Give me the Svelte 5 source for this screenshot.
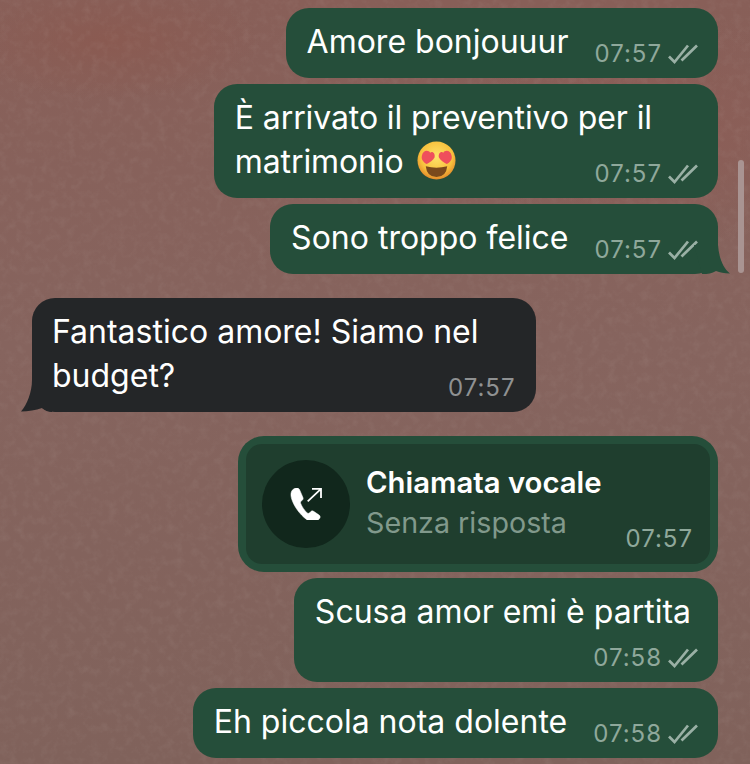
<script>
  const ticks = "M1 12.500 L6.500 18 L20 1.500 M13.500 16.500 L29 1.500";
</script>

<main class="chat">
  <svg class="texture" width="750" height="764" aria-hidden="true">
    <filter id="mottle">
      <feTurbulence type="fractalNoise" baseFrequency="0.12" numOctaves="4" seed="7" />
      <feColorMatrix values="0 0 0 0 0.6  0 0 0 0 0.52  0 0 0 0 0.48  1.2 0.4 0 0 -0.72" />
    </filter>
    <rect width="750" height="764" filter="url(#mottle)" opacity="0.14" />
  </svg>

  <div class="bubble out">
    Amore bonjouuur
    {@render meta("07:57", true)}
  </div>
  <div class="bubble out long">
    È arrivato il preventivo per il<br />matrimonio
    <svg class="emoji" viewBox="0 0 40 40" width="39" height="39">
      <defs>
        <radialGradient id="face" cx="50%" cy="40%" r="60%">
          <stop offset="0" stop-color="#fde36a" />
          <stop offset="0.7" stop-color="#f8c13d" />
          <stop offset="1" stop-color="#e2892a" />
        </radialGradient>
      </defs>
      <circle cx="20" cy="20" r="19.500" fill="url(#face)" />
      <path d="M9 26 Q20 29 31 26 Q30 37 20 37 Q10 37 9 26Z" fill="#7a4a1c" />
      <path d="M5 15 C6 9 12 9 13.500 12 C16 10 19 13 18 17 C16.500 20 13 22 10 23.500 C7 22 4 19 5 15Z" fill="#ef4f5c" />
      <path d="M35.500 15 C34.500 9 28.500 9 27 12 C24.500 10 21.500 13 22.500 17 C24 20 27.500 22 30.500 23.500 C33.500 22 36.500 19 35.500 15Z" fill="#ef4f5c" />
    </svg>
    {@render meta("07:57", true)}
  </div>
  <div class="bubble out tail-right">
    Sono troppo felice
    {@render meta("07:57", true)}
    <svg class="tail" viewBox="0 0 36 29" width="36" height="29"><path d="M24 0 C25 13 29 23 36 28.500 C30 28.500 26 27.500 22 26 C18 28.500 14 29 8 29 L0 0Z" /></svg>
  </div>

  <div class="bubble in">
    Fantastico amore! Siamo nel<br />budget?
    {@render meta("07:57", false)}
    <svg class="tail" viewBox="0 0 32 32" width="32" height="32"><path d="M12 0 C12 12 7 25 1 31.500 C8 31.500 16 30 22 28 C25 30.500 28 32 32 32 L32 0Z" /></svg>
  </div>

  <div class="bubble out call">
    <div class="call-inner">
      <span class="call-icon">
        <svg viewBox="0 0 32 32" width="32" height="32">
          <path transform="translate(-3.200 -3.200) scale(1.290)" d="M5 3.500 C3 5 2.800 8 3.800 11 C5.500 16.500 10 23 15.500 27 C18 28.800 20.500 29.300 22.500 28.500 C24 27.800 25.500 26.500 25.800 25.300 C26 24.300 25.500 23.800 24.800 23.300 L20.800 20.600 C20 20 19.200 20.100 18.500 20.800 L17.500 21.800 C16.900 22.300 16.300 22.200 15.800 21.800 C13.800 20 11.700 17 10.700 14.300 C10.500 13.600 10.700 13 11.300 12.600 L11.900 12 C12.700 11.400 12.800 10.600 12.500 9.800 L10 4 C9.500 3 8.800 2.500 7.800 2.500 C6.800 2.500 5.800 2.900 5 3.500Z" fill="#fff" stroke="#fff" stroke-width="0.400" />
          <path d="M17.700 13.300 L31 0.900 M22 0.900 H31 V10" fill="none" stroke="#fff" stroke-width="1.800" />
        </svg>
      </span>
      <div class="call-text">
        <strong>Chiamata vocale</strong>
        <span>Senza risposta</span>
      </div>
      <span class="time">07:57</span>
    </div>
  </div>

  <div class="bubble out wide">
    Scusa amor emi è partita<br />
    {@render meta("07:58", true)}
  </div>
  <div class="bubble out">
    Eh piccola nota dolente
    {@render meta("07:58", true)}
  </div>

  <div class="scrollbar"></div>
</main>

{#snippet meta(time, read)}
  <span class="meta">
    <span class="time">{time}</span>
    {#if read}
      <svg class="ticks" viewBox="0 0 30 20" width="30" height="20"><path d={ticks} /></svg>
    {/if}
  </span>
{/snippet}

<style>
  :global(body) {
    margin: 0;
    background: #86635f;
  }

  .chat {
    position: relative;
    box-sizing: border-box;
    width: 750px;
    height: 764px;
    overflow: hidden;
    padding: 8px 32px 0;
    display: flex;
    flex-direction: column;
    align-items: flex-end;
    background:
      radial-gradient(ellipse 150px 60px at 110px 40px, #8a5a51, transparent),
      radial-gradient(ellipse 200px 120px at 660px 130px, #8c5d56, transparent),
      linear-gradient(#885f58, #86645e 45%, #80625b);
    font-family: Inter, "Liberation Sans", sans-serif;
    font-size: 32px;
    line-height: 44px;
    color: #fff;
  }

  .texture {
    position: absolute;
    inset: 0;
  }

  .bubble {
    --trail: 0px;
    position: relative;
    display: flow-root;
    padding: 12px calc(20px + var(--trail)) 14px 21px;
    margin-bottom: 6px;
    border-radius: 23px;
    white-space: nowrap;
  }

  .out {
    background: #254e3a;
  }

  .long {
    --trail: 46px;
    letter-spacing: -0.1px;
  }

  .wide {
    --trail: 7px;
    padding-bottom: 8px;
  }

  .in {
    --trail: 37px;
    align-self: flex-start;
    padding-left: 20px;
    background: #242628;
    margin-top: 18px;
    margin-bottom: 24px;
  }

  .meta {
    float: right;
    display: flex;
    align-items: center;
    gap: 6px;
    height: 32px;
    margin: 18px calc(-1 * var(--trail)) -6px 26px;
  }

  .wide .meta {
    margin-top: 8px;
    margin-bottom: 0;
  }

  .time {
    font-size: 24px;
    letter-spacing: 1px;
    line-height: 32px;
    color: #8fa89b;
  }

  .in .time {
    color: #8f9192;
  }

  .ticks {
    fill: none;
    stroke: #9ab0a5;
    stroke-width: 2.700;
  }

  .emoji {
    vertical-align: -7px;
    margin-left: 4px;
  }

  .tail {
    position: absolute;
    bottom: 0;
    fill: #254e3a;
  }

  .tail-right .tail {
    right: -12px;
  }

  .in .tail {
    left: -12px;
    fill: #242628;
  }

  .call {
    padding: 8px;
    border-radius: 26px;
  }

  .call-inner {
    display: flex;
    align-items: center;
    gap: 16px;
    width: 464px;
    height: 120px;
    padding-left: 16px;
    box-sizing: border-box;
    position: relative;
    background: #1f3e2e;
    border-radius: 16px;
  }

  .call-icon {
    width: 88px;
    height: 88px;
    border-radius: 50%;
    background: #11271c;
    display: flex;
    align-items: center;
    justify-content: center;
  }

  .call-text {
    display: flex;
    flex-direction: column;
    line-height: 40px;
    margin-top: -3px;
  }

  .call-text strong {
    font-size: 29.300px;
    font-weight: 600;
  }

  .call-text span {
    font-size: 28.700px;
    color: #81998c;
  }

  .call-inner .time {
    position: absolute;
    right: 17px;
    bottom: 9px;
  }

  .scrollbar {
    position: absolute;
    left: 738px;
    top: 160px;
    width: 6px;
    height: 113px;
    border-radius: 3px;
    background: #a99492;
  }
</style>
